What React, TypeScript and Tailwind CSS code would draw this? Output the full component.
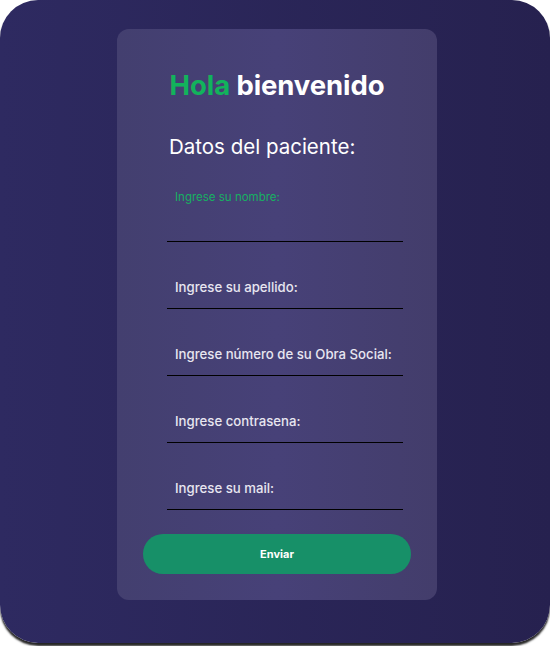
import React from "react";

const fields = [
  { label: "Ingrese su nombre:", active: true },
  { label: "Ingrese su apellido:", active: false },
  { label: "Ingrese número de su Obra Social:", active: false },
  { label: "Ingrese contrasena:", active: false },
  { label: "Ingrese su mail:", active: false },
];

export default function App() {
  return (
    <div className="w-[550px] h-[646px] bg-white" style={{ fontFamily: "Inter, 'Noto Sans', sans-serif" }}>
      <div className="w-[550px] h-[643px] rounded-[38px] bg-gradient-to-r from-[#2e2a61] to-[#26214f] shadow-[0_3px_2px_rgba(0,0,0,0.85)] flex justify-center pt-[29px] pl-[4px]">
        <div className="w-[320px] h-[571px] rounded-[12px] bg-gradient-to-r from-[#433f6f] via-[#474178] to-[#433d6b] flex flex-col">
          <h1 className="mt-[40px] text-center text-[27.5px] leading-[32px] font-bold tracking-[-0.1px]">
            <span className="text-[#12b35c]">Hola</span> <span className="text-white">bienvenido</span>
          </h1>
          <h2 className="mt-[34px] ml-[52px] text-[20.5px] leading-[24px] text-white font-normal whitespace-nowrap">Datos del paciente:</h2>
          <div className="ml-[50px] w-[236px] flex flex-col gap-[24px] mt-[40px]">
            {fields.map((f) => (
              <div key={f.label} className="relative h-[43px] border-b border-black">
                {f.active ? (
                  <span className="absolute left-[8px] top-[-10px] text-[11.5px] leading-[16px] text-[#17b062] whitespace-nowrap">{f.label}</span>
                ) : (
                  <span className="absolute left-[8px] top-[12px] text-[13.2px] leading-[18px] text-[#e8e6f0] font-medium whitespace-nowrap">{f.label}</span>
                )}
              </div>
            ))}
          </div>
          <div className="px-[26px] mt-[24px]">
            <button className="w-full h-[40px] rounded-[20px] bg-[#179068] text-white text-[11px] font-bold">Enviar</button>
          </div>
        </div>
      </div>
    </div>
  );
}
